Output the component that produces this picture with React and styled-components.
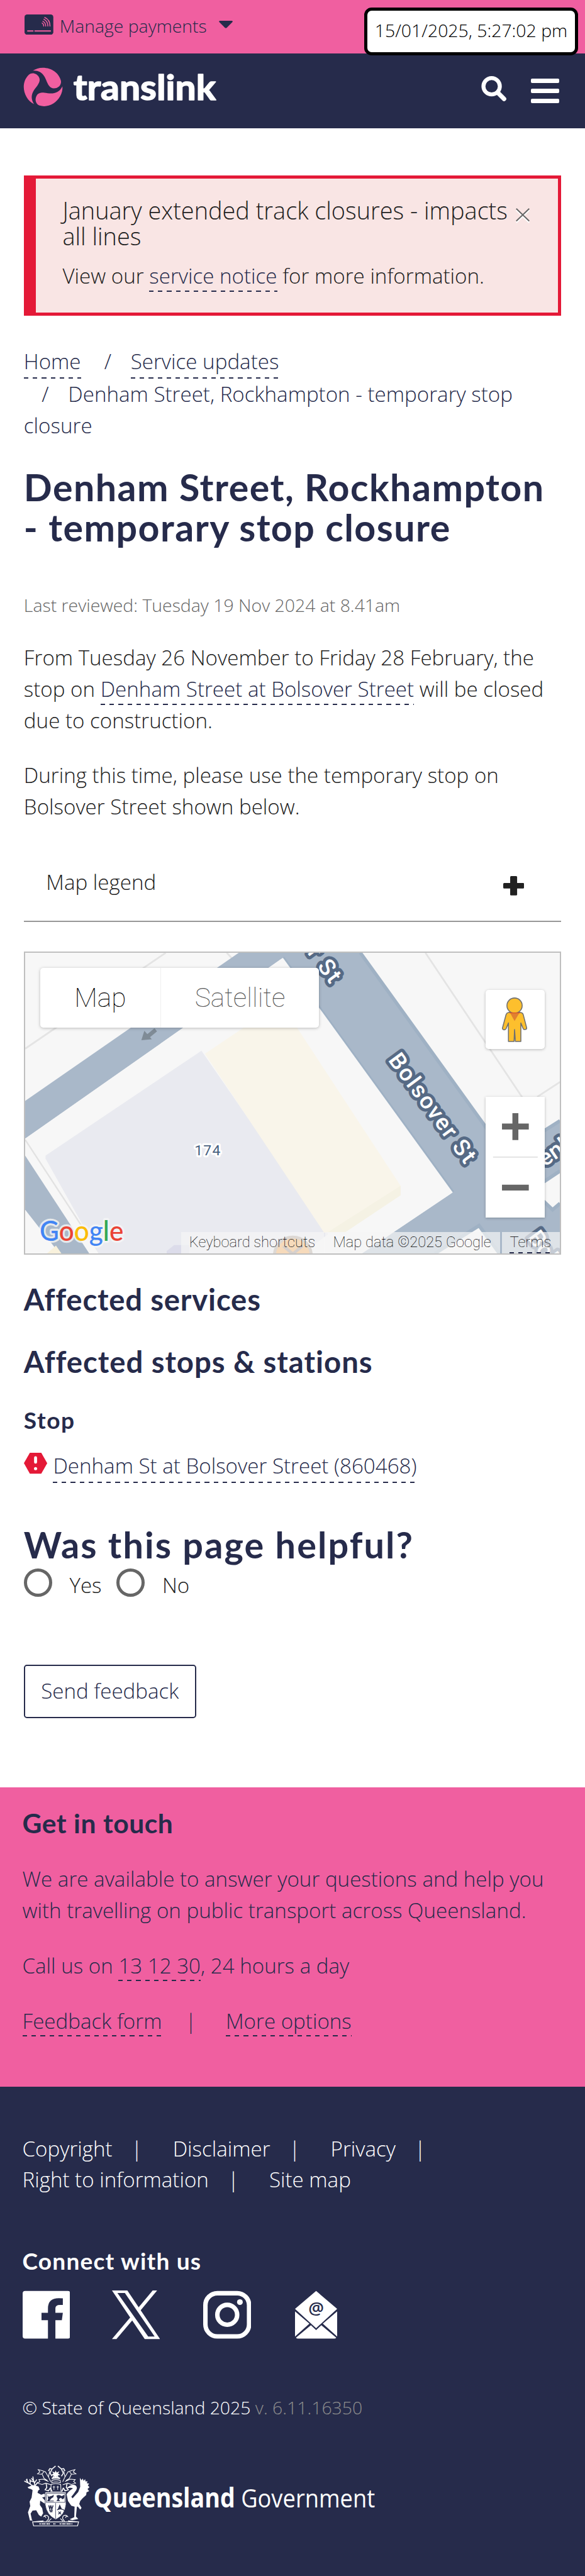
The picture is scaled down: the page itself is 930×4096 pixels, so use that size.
import React from 'react';
import styled, { createGlobalStyle, css } from 'styled-components';

const navy = '#262b4b';
const pink = '#f05fa0';
const ink = '#212121';
const red = '#e41937';

const Global = createGlobalStyle`
  *, *::before, *::after { box-sizing: border-box; }
  html { font-size: 7.89px; }
  body { margin: 0; background: #fff; }
  h1, h2, h3, p { margin: 0; }
  svg { display: block; }
`;

const Page = styled.div`
  position: relative;
  width: 100%;
  min-height: 100vh;
  display: flex;
  flex-direction: column;
  overflow: hidden;
  font-family: 'Open Sans', 'Noto Sans', sans-serif;
  font-weight: 300;
  font-size: 4.2rem;
  line-height: 6.3rem;
  color: ${ink};
`;

/* ---------- top bars ---------- */

const PaymentsBar = styled.div`
  height: 10.8rem;
  flex: none;
  display: flex;
  align-items: flex-start;
  padding: 2.5rem 4.9rem 0;
  background: ${pink};
  color: ${navy};
  font-size: 3.6rem;
  line-height: 5.4rem;
`;

const CardIcon = styled.svg`
  width: 5.8rem;
  height: 4.1rem;
  margin: 0.4rem 1.2rem 0 0.1rem;
`;

const Caret = styled.svg`
  width: 2.8rem;
  height: 1.6rem;
  margin: 1.7rem 0 0 2.4rem;
`;

const Clock = styled.div`
  position: absolute;
  z-index: 2;
  top: 1.5rem;
  right: 1.4rem;
  width: 43.1rem;
  height: 9.7rem;
  border: 5px solid #000;
  border-radius: 1.5rem;
  background: #fff;
  color: #000;
  text-align: center;
  font-size: 3.6rem;
  line-height: 8.1rem;
  white-space: nowrap;
`;

const SiteHeader = styled.header`
  height: 15rem;
  flex: none;
  display: flex;
  align-items: flex-start;
  padding: 2.8rem 5.2rem 0 4.7rem;
  background: ${navy};
`;

const Brand = styled.svg`
  width: 40rem;
  height: 9rem;
  margin-right: auto;
`;

const SearchIcon = styled.svg`
  width: 5.1rem;
  height: 5.1rem;
  margin: 1.7rem 4.9rem 0 0;
`;

const MenuButton = styled.div`
  width: 5.7rem;
  margin-top: 2.2rem;
  display: flex;
  flex-direction: column;
  gap: 1.08rem;
`;

const MenuBar = styled.span`
  height: 0.96rem;
  border-radius: 2px;
  background: #fff;
`;

/* ---------- main column ---------- */

const Main = styled.main`
  flex: none;
  height: 334.35rem;
  padding: 9.6rem 4.8rem 0;
`;

const Alert = styled.section`
  height: 28.2rem;
  display: flex;
  align-items: flex-start;
  border: 5px solid ${red};
  border-left-width: 19px;
  background: #f9e5e4;
  padding: 3.95rem 5.7rem 0 5.4rem;
`;

const AlertBody = styled.div`
  flex: 1;
  white-space: nowrap;
`;

const AlertTitle = styled.p`
  font-size: 4.8rem;
  line-height: 5.15rem;
  margin-bottom: 2.25rem;
`;

const CloseIcon = styled.svg`
  width: 2.8rem;
  height: 3rem;
  margin-top: 2rem;
`;

const Link = styled.a`
  color: ${navy};
  padding-bottom: 0.34rem;
  background: repeating-linear-gradient(90deg, ${navy} 0 0.9rem, transparent 0.9rem 1.8rem)
    0 100% / 100% 2px no-repeat;
`;

const Crumbs = styled.nav`
  margin-top: 6.1rem;
  color: ${navy};
`;

const CrumbRow = styled.div`
  display: flex;
  padding-left: ${(p) => (p.$indent ? '3.6rem' : '0')};
`;

const Slash = styled.span`
  margin: 0 3.9rem 0 ${(p) => (p.$lead ? '4.7rem' : '0')};
`;

const heading = css`
  font-family: Lato, 'Open Sans', sans-serif;
  font-weight: 700;
  color: ${navy};
  white-space: nowrap;
`;

const PageTitle = styled.h1`
  ${heading}
  margin-top: 5.25rem;
  font-size: 7.5rem;
  line-height: 8.1rem;
  letter-spacing: 0.185rem;
`;

const Reviewed = styled.p`
  margin-top: 8.85rem;
  font-size: 3.6rem;
  line-height: 5.4rem;
  color: #666;
`;

const Para = styled.p`
  margin-top: 4.8rem;
  white-space: nowrap;
`;

const Legend = styled.div`
  margin-top: 8.98rem;
  height: 11.1rem;
  display: flex;
  justify-content: space-between;
  padding: 0 7.5rem 0 4.5rem;
  border-bottom: 2px solid #979797;
`;

const PlusIcon = styled.svg`
  width: 4.2rem;
  height: 3.9rem;
  margin-top: 1.9rem;
`;

const SectionTitle = styled.h2`
  ${heading}
  margin-top: ${(p) => (p.$first ? '5.6rem' : '5.98rem')};
  font-size: 6rem;
  line-height: 6.6rem;
  letter-spacing: ${(p) => (p.$first ? '0.1rem' : '0.12rem')};
`;

const StopTitle = styled.h3`
  ${heading}
  margin-top: 5.85rem;
  font-size: 4.7rem;
  line-height: 5.4rem;
  letter-spacing: 0.2rem;
`;

const StopRow = styled.div`
  margin-top: 3.3rem;
  display: flex;
  align-items: flex-start;
`;

const WarningIcon = styled.svg`
  width: 4.7rem;
  height: 4.2rem;
  margin: 0.6rem 1.2rem 0 0;
`;

const FeedbackTitle = styled.h2`
  ${heading}
  margin-top: 8.3rem;
  font-size: 7.3rem;
  line-height: 8rem;
  letter-spacing: 0.27rem;
`;

const Options = styled.div`
  margin-top: 0.9rem;
  height: 5.7rem;
  display: flex;
`;

const Option = styled.label`
  display: flex;
  width: 18.7rem;
`;

const Radio = styled.span`
  width: 5.7rem;
  height: 5.7rem;
  margin-right: 3.5rem;
  border: 5px solid #666;
  border-radius: 50%;
`;

const OptionText = styled.span`
  padding-top: 0.3rem;
`;

const SendButton = styled.button`
  display: block;
  margin-top: 13.75rem;
  width: 34.7rem;
  height: 10.8rem;
  padding: 0 0 0.3rem;
  border: 2.4px solid ${navy};
  border-radius: 0.6rem;
  background: #fff;
  color: ${navy};
  font: inherit;
`;

/* ---------- map ---------- */

const MapFrame = styled.div`
  position: relative;
  margin-top: 6rem;
  height: 61.1rem;
  border: 2px solid #bfbfbf;
  overflow: hidden;
  font-family: Roboto, sans-serif;
`;

const MapCanvas = styled.svg`
  width: 100%;
  height: 100%;
`;

const TypeSwitch = styled.div`
  position: absolute;
  top: 3.05rem;
  left: 3.05rem;
  height: 12rem;
  display: flex;
  border-radius: 0.6rem;
  background: #fff;
  box-shadow: 0 1px 5px rgba(0, 0, 0, 0.25);
`;

const TypeOption = styled.div`
  width: ${(p) => p.$width};
  border-left: ${(p) => (p.$muted ? '1px solid #f0f0f0' : '0')};
  color: ${(p) => (p.$muted ? '#565656' : '#000')};
  text-align: center;
  font-weight: 100;
  font-size: 5.4rem;
  line-height: 12rem;
`;

const MapButton = styled.div`
  position: absolute;
  right: 3rem;
  top: ${(p) => p.$top};
  width: 12rem;
  height: ${(p) => p.$height};
  border-radius: ${(p) => p.$radius || 0};
  background: #fff;
  box-shadow: 0 1px 4px rgba(0, 0, 0, 0.25);

  svg { width: 100%; height: 100%; }
`;

const Attribution = styled.div`
  position: absolute;
  right: 0;
  bottom: 0;
  height: 4.3rem;
  display: flex;
  gap: 0.3rem;
  color: #000;
  font-weight: 100;
  font-size: 3rem;
  line-height: 4.1rem;
  white-space: nowrap;
`;

const Credit = styled.span`
  width: ${(p) => p.$width};
  padding-left: 1.6rem;
  background: rgba(245, 245, 245, 0.7);
`;

const TermsLink = styled.a`
  display: inline-block;
  height: 4.3rem;
  background: repeating-linear-gradient(90deg, ${navy} 0 0.9rem, transparent 0.9rem 1.8rem)
    0 100% / 100% 2px no-repeat;
`;

const roadText = {
  fontFamily: 'Roboto, sans-serif',
  fontWeight: 500,
  fontSize: 46,
  fill: '#fff',
  stroke: '#566a85',
  strokeWidth: 13,
  strokeLinejoin: 'round',
  paintOrder: 'stroke',
};

const GOOGLE = [
  ['G', '#4285f4'],
  ['o', '#ea4335'],
  ['o', '#fbbc04'],
  ['g', '#4285f4'],
  ['l', '#34a853'],
  ['e', '#ea4335'],
];

function StopMap() {
  return (
    <MapFrame>
      <MapCanvas viewBox="0 0 1077 605" preserveAspectRatio="none">
        <rect width="1077" height="605" fill="#f7f7f7" />
        <g stroke="#e4e4e4" strokeWidth="3.5" fill="none">
          <path d="M283 0L0 193M406 0L419 14M806 0L1003 294M1031 290L1077 260" />
        </g>
        <path d="M430 0L0 298V374L519 10L861 482L678 605H825L914 549L955 605H1077V504L1062 517L1020 477L1077 439V338L968 407L675 0Z" fill="#a9b8c9" />
        <path d="M675 0L968 407L1077 338M1077 439L1020 477L1062 517L1077 504M519 10L861 482M825 605L914 549L955 605" fill="none" stroke="#9fb1c4" strokeWidth="7" />
        <path d="M519 10L861 482L678 605H129L0 408V374Z" fill="#f7f7f7" />
        <path d="M0 408L129 605H69L0 517Z" fill="#a9b8c9" />
        <path d="M62 589L73 605H44Z" fill="#f8f1dc" />
        <path d="M0 376L150 605" stroke="#e2e2e2" strokeWidth="3" />
        <path d="M355 197L41 408V414L148 605H560L610 566Z" fill="#e9eaf0" />
        <path d="M441 150H547L756 469V488L645 562L602 563L362 203Z" fill="#f9f5ea" />
        <path d="M756 469V488L645 562H610Z" fill="#f5f2e4" />
        <path d="M285 600L300 588H330V605H285Z" fill="#dcdcea" />
        <path d="M263 155L246 169" stroke="#7f8b96" strokeWidth="8" />
        <path d="M234 176L240 157L255 174Z" fill="#7f8b96" />
        <circle cx="539" cy="609" r="37" fill="#f79a35" stroke="#a39486" strokeWidth="6" />
        <path d="M520 590L558 622M558 590L520 622" stroke="#8c7a70" strokeWidth="6" />
        <text x="341" y="408" textLength="52" fontFamily="Roboto" fontWeight="400" fontSize="29" fill="#48617f" stroke="#fff" strokeWidth="8" strokeLinejoin="round" paintOrder="stroke">174</text>
        <text {...roadText} textLength="262" transform="translate(730 216) rotate(53.6)">Bolsover St</text>
        <text {...roadText} textLength="262" textAnchor="end" transform="translate(614 64) rotate(54)">Bolsover St</text>
        <text {...roadText} transform="translate(1021 448) rotate(-34)">Denham St</text>
        <text {...roadText} transform="translate(1010 573) rotate(54)">Bolsover St</text>
        <text x="29" y="580" textLength="169" lengthAdjust="spacingAndGlyphs" fontFamily="Lato" fontWeight="500" fontSize="57" stroke="#f7f7f7" strokeOpacity="0.8" strokeWidth="8" strokeLinejoin="round" paintOrder="stroke">
          {GOOGLE.map(([letter, fill], i) => (
            <tspan key={i} fill={fill}>{letter}</tspan>
          ))}
        </text>
      </MapCanvas>
      <TypeSwitch>
        <TypeOption $width="24.2rem">Map</TypeOption>
        <TypeOption $width="32rem" $muted>Satellite</TypeOption>
      </TypeSwitch>
      <MapButton $top="7.4rem" $height="12rem" $radius="0.6rem">
        <svg viewBox="714 282 360 360">
          <g fill="#fdbf2d" stroke="#707070" strokeWidth="6" strokeLinejoin="round">
            <path d="M852 419Q842 420 838 430L816 512Q814 521 824 523Q834 525 838 516L852 482V594H886L889 522L894 594H927V482L941 516Q945 524 955 521Q964 519 962 511L941 430Q937 420 926 419Q905 412 889 412Q870 412 852 419Z" />
            <circle cx="889" cy="377" r="46" />
          </g>
          <path d="M862 422H918L889 470Z" fill="#e18030" />
          <path d="M858 421H922" stroke="#d8542a" strokeWidth="5" />
        </svg>
      </MapButton>
      <MapButton $top="29rem" $height="24.3rem">
        <svg viewBox="0 0 120 243">
          <path d="M33 60H87M60 33V87M33 183H87" stroke="#666" strokeWidth="12" />
          <path d="M15 121.5H105" stroke="#e6e6e6" strokeWidth="3" />
        </svg>
      </MapButton>
      <Attribution>
        <Credit $width="28.7rem">Keyboard shortcuts</Credit>
        <Credit $width="35.3rem">Map data ©2025 Google</Credit>
        <Credit $width="11.7rem"><TermsLink>Terms</TermsLink></Credit>
      </Attribution>
    </MapFrame>
  );
}

/* ---------- contact and footer ---------- */

const Contact = styled.section`
  flex: none;
  height: 60.35rem;
  padding: 4.27rem 4.5rem 0;
  background: ${pink};
  color: ${navy};

  p { margin-top: 4.83rem; white-space: nowrap; }
  h2 + p { margin-top: 5.15rem; }
`;

const ContactTitle = styled.h2`
  ${heading}
  font-size: 5.4rem;
  line-height: 6rem;
  letter-spacing: 0.07rem;
`;

const Divider = styled.span`
  margin: 0 ${(p) => p.$after || '6.1rem'} 0 ${(p) => p.$before || '3.8rem'};
`;

const Footer = styled.footer`
  flex: 1;
  padding: 9.36rem 4.5rem 0;
  background: ${navy};
  color: #fff;
`;

const FooterRow = styled.div`
  display: flex;
  white-space: pre;
`;

const ConnectTitle = styled.h2`
  ${heading}
  margin-top: 10.5rem;
  color: #fff;
  font-size: 4.7rem;
  line-height: 5.4rem;
  letter-spacing: 0.15rem;
`;

const Socials = styled.div`
  margin-top: 3.3rem;
  display: flex;
  height: 9.8rem;
`;

const SocialIcon = styled.svg`
  width: ${(p) => p.$width};
  height: 9.8rem;
  margin-right: ${(p) => p.$gap || 0};
`;

const Copyright = styled.p`
  margin-top: 11rem;
  font-size: 3.6rem;
  line-height: 5.4rem;
`;

const Version = styled.span`
  color: #8d8d8d;
`;

const GovLogo = styled.svg`
  margin-top: 8.97rem;
  width: 72rem;
  height: 12.6rem;
`;

function Crest() {
  return (
    <g transform="scale(0.3333)" fill="#fff" stroke="none">
      {/* crest and mantling */}
      <g fill="none" stroke="#fff" strokeWidth="4">
        <path d="M193 4L172 22L158 20L150 34M207 4L228 22L242 20L250 34M172 22L160 48L172 66M228 22L240 48L228 66" strokeWidth="6" />
        <path d="M158 32L150 70L164 100M242 32L250 70L236 100M150 70L132 40L112 32L88 26L98 40L84 52L108 54L122 40M250 70L268 40L288 32L310 26L300 40L316 52L290 54L278 40" />
        <path d="M112 54L124 80L144 92M288 54L276 80L256 92M150 98L118 84L92 86L98 98L84 108L112 116L134 108L166 118M250 98L282 84L312 86L302 98L314 108L288 116L266 108L236 118" />
        <path d="M136 112L140 134L130 148L150 154L162 136M262 112L258 134L270 148L250 154L240 136M162 136L172 160M240 136L230 160" strokeWidth="6" />
        <path d="M170 92Q194 82 222 92V106Q194 96 170 106Z M166 116Q194 104 224 116L226 160H164Z" />
        <path d="M183 124V148M176 131H190M206 124V148M199 131H213" strokeWidth="3.5" />
      </g>
      <path d="M194 30L199 44L216 36L208 50L222 58L206 62L214 76L199 68L193 82L188 68L174 76L181 62L166 58L180 50L172 36L188 44Z" />
      <path d="M170 74Q194 66 220 74V84Q194 76 170 84Z" />
      {/* stag */}
      <path d="M24 132L50 122L62 120L90 128L97 146L88 152L84 166L106 178L124 172L136 178L132 190L112 194L138 222L128 232L100 214L98 240L112 260L118 290L106 310L92 300L76 272L54 274L42 292L50 330L56 334H38L26 284L40 246L36 220L48 196L54 150L44 144L30 140Z" />
      <path d="M52 122L30 108L16 88M30 108L6 96M22 102L20 84M40 114L38 86M68 122L62 96L48 80M62 100L42 94M66 106L78 88M72 120L84 104M60 96L56 70" fill="none" stroke="#fff" strokeWidth="6" strokeLinecap="round" />
      {/* brolga */}
      <path d="M262 136Q288 112 312 120Q328 132 318 150L300 176L288 190L296 200L330 162L342 130L340 76L350 90L358 80L362 94L372 84L374 98L386 96L382 108L396 110L388 122L398 132L386 144L396 156L380 164L378 180L356 200L342 216L336 234L350 258L342 268L328 250L322 250L316 310L330 324L294 332L278 326L306 314L308 250L288 244L268 216L260 176Q268 158 298 140Q286 132 262 140Z" />
      {/* shield */}
      <path d="M130 162H256V238Q250 300 194 328Q138 300 130 238Z" fill="#fff" stroke="#262b4b" strokeWidth="3" />
      <g fill="none" stroke="#262b4b" strokeWidth="3">
        <path d="M137 170H250V224H137ZM193 228V324" />
        <path d="M152 242L158 266L164 242L170 266L178 242M154 272H176M158 280H174" strokeWidth="6" />
        <path d="M202 270Q224 256 250 274M210 280L226 296M226 280L210 296" strokeWidth="5" />
      </g>
      <path d="M144 176L150 190L172 184L182 178L180 192L168 200L156 214H182V218H142L148 204ZM198 184Q214 174 230 186L246 178Q250 206 232 204L226 196L212 204L220 216H198L206 204ZM218 236L232 266H206Z" fill="#262b4b" />
      {/* scroll */}
      <path d="M54 342H332L326 366H60ZM138 338Q162 320 144 304Q128 298 122 310Q134 306 134 318M248 338Q226 320 242 304Q258 298 266 310Q254 306 254 318M150 338L168 322M238 338L222 322M58 342L120 336M328 342L268 336" fill="none" stroke="#fff" strokeWidth="4.5" />
      <path d="M96 354H160M180 354H196M218 354H294" stroke="#fff" strokeWidth="8" strokeDasharray="6 4 3 4 8 3" />
    </g>
  );
}

const BLADE =
  'M55 18C72 6 92 0 115 0C168 0 214 32 225 80C228 105 208 125 181 125C160 124 150 108 143 93C130 62 116 14 55 18Z';

export default function App() {
  return (
    <Page>
      <Global />
      <PaymentsBar>
        <CardIcon viewBox="0 0 174 123">
          <rect width="174" height="123" rx="16" fill={navy} />
          <path d="M19 100H51M63 100H157" stroke={pink} strokeWidth="7" strokeLinecap="round" />
          <path d="M106 52Q116 57 116 70M111 41Q128 49 128 70M117 29Q141 41 141 70M122 18Q154 32 154 70" fill="none" stroke={pink} strokeWidth="5.5" strokeLinecap="round" />
        </CardIcon>
        Manage payments
        <Caret viewBox="0 0 28 16">
          <path d="M2 0H26Q29 1 27 3L16 14Q14 16 12 14L1 3Q-1 1 2 0Z" fill={navy} />
        </Caret>
      </PaymentsBar>
      <Clock>15/01/2025, 5:27:02 pm</Clock>

      <SiteHeader>
        <Brand viewBox="0 0 400 90">
          <g transform="translate(1 0.8) scale(0.3333)" fill={pink}>
            <path d={BLADE} />
            <path d={BLADE} transform="rotate(120 117 117)" />
            <path d={BLADE} transform="rotate(240 117 117)" />
          </g>
          <text x="101" y="66" textLength="287" lengthAdjust="spacingAndGlyphs" fontFamily="Lato" fontWeight="700" fontSize="71" fill="#fff" stroke="#fff" strokeWidth="2" strokeLinejoin="round">translink</text>
        </Brand>
        <SearchIcon viewBox="0 0 51 51">
          <circle cx="21" cy="20.5" r="16.5" fill="none" stroke="#fff" strokeWidth="8" />
          <path d="M33 33L46 46" stroke="#fff" strokeWidth="9" strokeLinecap="round" />
        </SearchIcon>
        <MenuButton>
          <MenuBar />
          <MenuBar />
          <MenuBar />
        </MenuButton>
      </SiteHeader>

      <Main>
        <Alert>
          <AlertBody>
            <AlertTitle>January extended track closures - impacts<br />all lines</AlertTitle>
            <p>View our <Link>service notice</Link> for more information.</p>
          </AlertBody>
          <CloseIcon viewBox="0 0 28 30">
            <path d="M1 4L27 29M27 4L1 29" stroke="#fff" strokeWidth="3" />
            <path d="M1 1L27 26M27 1L1 26" stroke="#666" strokeWidth="2.5" />
          </CloseIcon>
        </Alert>

        <Crumbs>
          <CrumbRow>
            <Link>Home</Link>
            <Slash $lead>/</Slash>
            <Link>Service updates</Link>
          </CrumbRow>
          <CrumbRow $indent>
            <Slash>/</Slash>
            Denham Street, Rockhampton - temporary stop
          </CrumbRow>
          <CrumbRow>closure</CrumbRow>
        </Crumbs>

        <PageTitle>Denham Street, Rockhampton<br />- temporary stop closure</PageTitle>
        <Reviewed>Last reviewed: Tuesday 19 Nov 2024 at 8.41am</Reviewed>
        <Para>
          From Tuesday 26 November to Friday 28 February, the<br />
          stop on <Link>Denham Street at Bolsover Street</Link> will be closed<br />
          due to construction.
        </Para>
        <Para>
          During this time, please use the temporary stop on<br />
          Bolsover Street shown below.
        </Para>

        <Legend>
          Map legend
          <PlusIcon viewBox="0 0 42 39">
            <rect x="0" y="14" width="42" height="11" rx="2" fill={ink} />
            <rect x="14" y="0" width="14" height="39" rx="2" fill={ink} />
          </PlusIcon>
        </Legend>
        <StopMap />

        <SectionTitle $first>Affected services</SectionTitle>
        <SectionTitle>Affected stops &amp; stations</SectionTitle>
        <StopTitle>Stop</StopTitle>
        <StopRow>
          <WarningIcon viewBox="0 0 47 42">
            <path d="M12 0H35L47 21L35 42H12L0 21Z" fill={red} />
            <path d="M23.5 10V19" stroke="#fff" strokeWidth="6" strokeLinecap="round" />
            <circle cx="23.5" cy="32" r="3.2" fill="#fff" />
          </WarningIcon>
          <Link>Denham St at Bolsover Street (860468)</Link>
        </StopRow>

        <FeedbackTitle>Was this page helpful?</FeedbackTitle>
        <Options>
          <Option><Radio /><OptionText>Yes</OptionText></Option>
          <Option><Radio /><OptionText>No</OptionText></Option>
        </Options>
        <SendButton>Send feedback</SendButton>
      </Main>

      <Contact>
        <ContactTitle>Get in touch</ContactTitle>
        <p>We are available to answer your questions and help you<br />with travelling on public transport across Queensland.</p>
        <p>Call us on <Link>13 12 30</Link>, 24 hours a day</p>
        <p>
          <Link>Feedback form</Link>
          <Divider $before="4.7rem" $after="5.9rem">|</Divider>
          <Link>More options</Link>
        </p>
      </Contact>

      <Footer>
        <FooterRow>
          Copyright<Divider>|</Divider>
          Disclaimer<Divider>|</Divider>
          Privacy<Divider>|</Divider>
        </FooterRow>
        <FooterRow>
          Right to information<Divider>|</Divider>
          Site map
        </FooterRow>

        <ConnectTitle>Connect with us</ConnectTitle>
        <Socials>
          <SocialIcon viewBox="0 0 96 98" $width="9.6rem" $gap="8.4rem">
            <path d="M5 1H91Q96 1 96 6V92Q96 97 91 97H66V60H79L81 45H66V36Q66 29 75 29H81V16Q51 12 51 36V45H38V60H51V97H5Q0 97 0 92V6Q0 1 5 1Z" fill="#fff" />
          </SocialIcon>
          <SocialIcon viewBox="0 0 97 98" $width="9.7rem" $gap="8.7rem">
            <path fillRule="evenodd" d="M0 0H31L97 98H66ZM11 5L73 93H86L26 5Z" fill="#fff" />
            <path d="M82 0H91L57 41L53 35ZM0 98H9L42 59L38 53Z" fill="#fff" />
          </SocialIcon>
          <SocialIcon viewBox="0 0 97 98" $width="9.7rem" $gap="8.8rem">
            <rect x="4.5" y="5.5" width="88" height="87" rx="24" fill="none" stroke="#fff" strokeWidth="9" />
            <circle cx="48.5" cy="49" r="20" fill="none" stroke="#fff" strokeWidth="9" />
            <circle cx="74" cy="23.5" r="5.8" fill="#fff" />
          </SocialIcon>
          <SocialIcon viewBox="0 0 85 98" $width="8.5rem">
            <path d="M42.5 1L85 37L42.5 76L0 37ZM0 42L29 67L0 93ZM85 42L56 67L85 93ZM32 70L42.5 80L53 70L83 95Q82 97 79 97H6Q3 97 2 95Z" fill="#fff" />
            <text x="42.5" y="48" textAnchor="middle" fontFamily="Open Sans" fontWeight="600" fontSize="35" fill={navy}>@</text>
          </SocialIcon>
        </Socials>

        <Copyright>© State of Queensland 2025 <Version>v. 6.11.16350</Version></Copyright>
        <GovLogo viewBox="0 0 720 126">
          <g transform="translate(2 0)"><Crest /></g>
          <text x="143" y="84.5" textLength="285" lengthAdjust="spacingAndGlyphs" fontFamily="Open Sans" fontWeight="700" fontSize="54" fill="#fff">Queensland</text>
          <text x="440" y="84.5" textLength="270" lengthAdjust="spacingAndGlyphs" fontFamily="Open Sans" fontWeight="400" fontSize="52" fill="#fff">Government</text>
        </GovLogo>
      </Footer>
    </Page>
  );
}
